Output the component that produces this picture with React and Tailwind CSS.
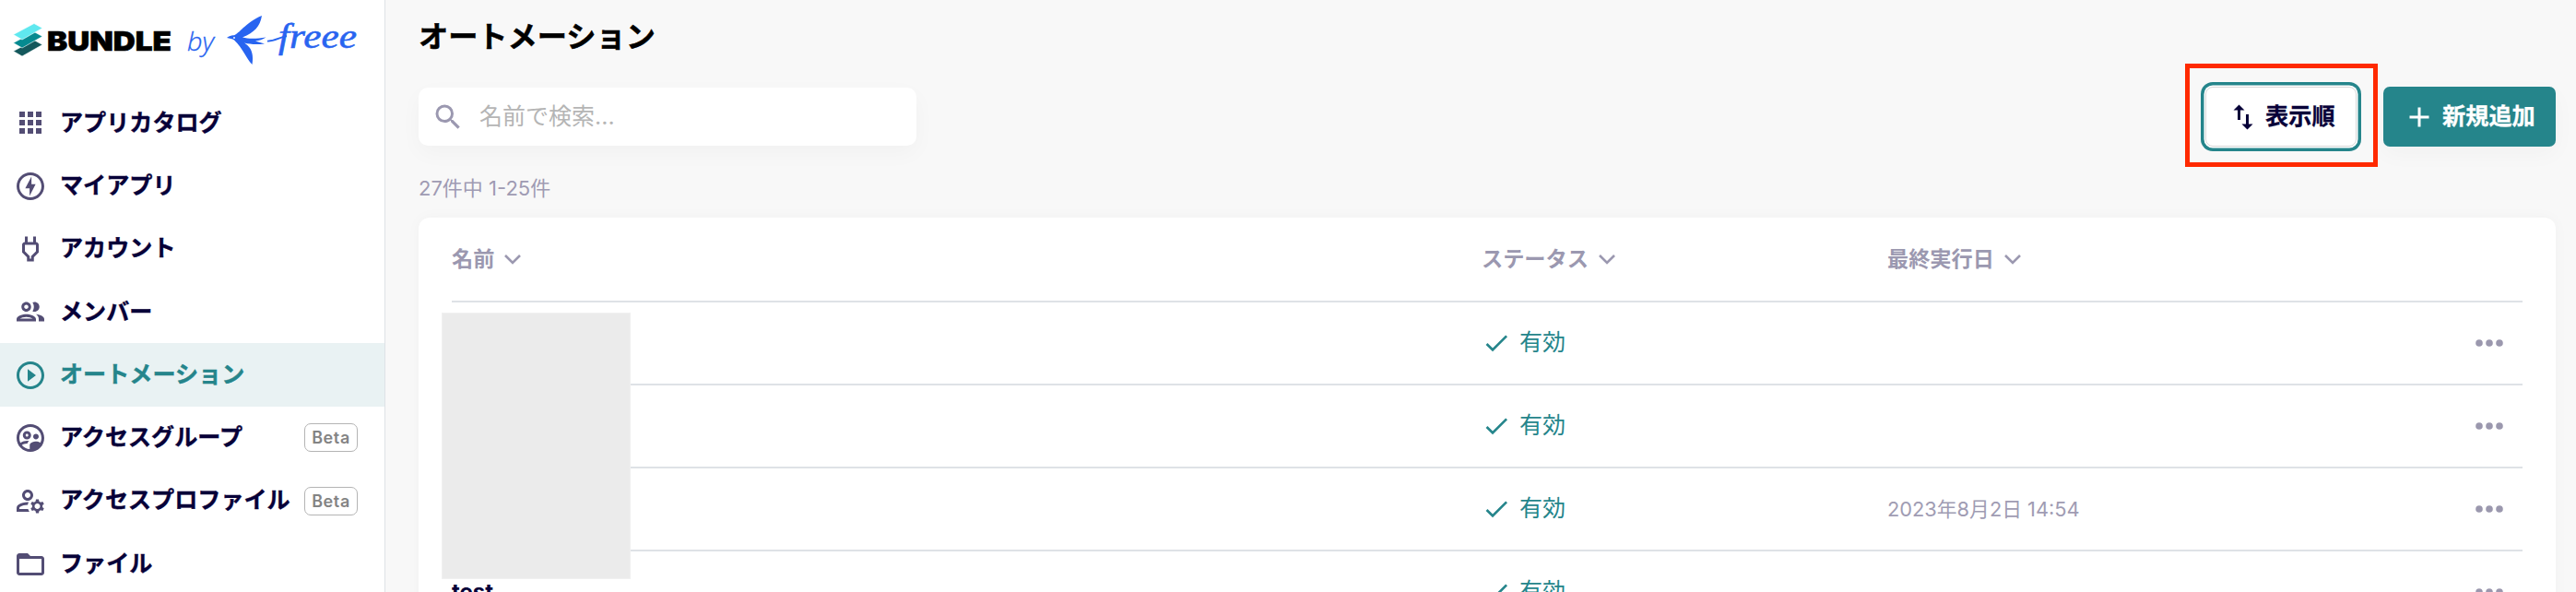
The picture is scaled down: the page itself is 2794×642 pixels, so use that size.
import {
  MdAdd,
  MdApps,
  MdCheck,
  MdFolderOpen,
  MdOutlineManageAccounts,
  MdOutlineOfflineBolt,
  MdOutlinePower,
  MdOutlineSupervisedUserCircle,
  MdPlayCircleOutline,
  MdSearch,
  MdSwapVert,
} from "react-icons/md";

function MembersIcon({ className }) {
  return (
    <svg viewBox="0 0 24 24" fill="currentColor" className={className}>
      <path d="M9 13.75c-2.34 0-7 1.17-7 3.5V19h14v-1.75c0-2.33-4.66-3.5-7-3.5zM4.34 17c.84-.58 2.87-1.25 4.66-1.25s3.82.67 4.66 1.25H4.34zM9 12c1.93 0 3.5-1.57 3.5-3.5S10.93 5 9 5 5.5 6.57 5.5 8.5 7.07 12 9 12zm0-5c.83 0 1.5.67 1.5 1.5S9.83 10 9 10s-1.5-.67-1.5-1.5S8.17 7 9 7zm7.04 6.81c1.16.84 1.96 1.96 1.96 3.44V19h4v-1.75c0-2.02-3.5-3.17-5.96-3.44zM15 12c1.93 0 3.5-1.57 3.5-3.5S16.93 5 15 5c-.54 0-1.04.13-1.5.35.63.89 1 1.98 1 3.15s-.37 2.26-1 3.15c.46.22.96.35 1.5.35z" />
    </svg>
  );
}

const navItems = [
  { label: "アプリカタログ", icon: MdApps },
  { label: "マイアプリ", icon: MdOutlineOfflineBolt },
  { label: "アカウント", icon: MdOutlinePower },
  { label: "メンバー", icon: MembersIcon },
  { label: "オートメーション", icon: MdPlayCircleOutline, active: true },
  { label: "アクセスグループ", icon: MdOutlineSupervisedUserCircle, beta: true },
  { label: "アクセスプロファイル", icon: MdOutlineManageAccounts, beta: true },
  { label: "ファイル", icon: MdFolderOpen },
];

const rows = [
  { name: "", status: "有効", lastRun: "" },
  { name: "", status: "有効", lastRun: "" },
  { name: "", status: "有効", lastRun: "2023年8月2日 14:54" },
  { name: "test", status: "有効", lastRun: "" },
];

function Logo() {
  return (
    <svg viewBox="0 0 400 80" className="block h-20 w-[400px]">
      {/* Stacked sheets */}
      <g stroke="#fff" strokeWidth="0.6">
        <path d="M14.5 55.5 37 43.5 46 48.5 24 61Z" fill="#14585c" />
        <path d="M14.5 46.5 37 34.5 46 39.5 24 52Z" fill="#058a90" />
        <path d="M14.5 37.5 37 25.5 46 30.5 24 43Z" fill="#5fe8ef" />
      </g>
      <text
        x="51"
        y="54.5"
        textLength="135"
        lengthAdjust="spacingAndGlyphs"
        className="fill-black stroke-black stroke-[0.6] font-['Inter',sans-serif] text-[29px] font-black"
      >
        BUNDLE
      </text>
      <text
        x="203"
        y="54.5"
        textLength="29"
        lengthAdjust="spacingAndGlyphs"
        className="fill-[#2864f0] stroke-[#2864f0] stroke-[0.3] font-['Open_Sans',sans-serif] text-[27px] font-light italic"
      >
        by
      </text>
      {/* Swallow */}
      <g fill="#2864f0">
        <path d="M246 41C249 39 251 38 254 38.3C262 34 267 24 284 17C282 29 276 35 263 40.5C270 42.5 279 42 288.5 40.5C285 43 281 44 277 44.5L287 47.5C278 48.5 271 48 265 46.5C272 51 275.5 57 273.5 70C266 62 264 53 254 43.5C252 42 249 41.5 246 41Z" />
        <circle cx="254" cy="41" r="0.9" fill="#fff" />
      </g>
      <path d="M290 44.5C297 45 302 41 311 39" fill="none" stroke="#2864f0" strokeWidth="1.8" />
      <text
        x="302"
        y="52"
        textLength="85"
        lengthAdjust="spacingAndGlyphs"
        className="fill-[#2864f0] stroke-[#2864f0] stroke-[0.6] font-['Liberation_Serif',serif] text-[38px] italic"
      >
        freee
      </text>
    </svg>
  );
}

function NavItem({ label, icon: Icon, active, beta }) {
  return (
    <a
      className={`flex h-[68.3px] items-center pr-[29px] pl-[15px] ${
        active ? "bg-[#e9f2f3] text-[#25858b]" : "text-[#070038]"
      }`}
    >
      <Icon className={`size-9 shrink-0 ${active ? "" : "text-[#534d74]"}`} />
      <span className="ml-[14px] text-[25.1px] font-bold whitespace-nowrap [-webkit-text-stroke:0.4px]">
        {label}
      </span>
      {beta && (
        <span className="ml-auto flex h-[31px] w-[58px] items-center justify-center rounded-[7px] border border-[#b4b4b4] text-[18px] font-semibold tracking-[0.6px] text-[#848484]">
          Beta
        </span>
      )}
    </a>
  );
}

function Sidebar() {
  return (
    <aside className="h-full w-[418px] shrink-0 border-r border-[#dee2e6] bg-white">
      <div className="h-[99.3px]">
        <Logo />
      </div>
      <nav>
        {navItems.map((item) => (
          <NavItem key={item.label} {...item} />
        ))}
      </nav>
    </aside>
  );
}

function ColumnHeader({ children }) {
  return (
    <div className="flex items-center gap-[11px]">
      <span>{children}</span>
      <svg viewBox="0 0 18 12" className="h-3 w-[18px]">
        <path d="M1 2 9 10 17 2" fill="none" stroke="currentColor" strokeWidth="2.6" />
      </svg>
    </div>
  );
}

function Row({ name, status, lastRun }) {
  return (
    <div className="grid h-[90px] grid-cols-[1117px_440px_1fr_73px] items-center border-b-2 border-[#dee2e6]">
      <span className="text-[24px] font-bold text-[#070038]">{name}</span>
      <span className="flex items-center gap-[9px] text-[25px] text-[#25858b]">
        <MdCheck className="size-8" />
        {status}
      </span>
      <span className="text-[21.8px] text-[#a09cb3]">{lastRun}</span>
      <svg viewBox="0 0 30 8" className="ml-[22px] h-2 w-[30px] fill-[#9b98ae]">
        <circle cx="4" cy="4" r="3.8" />
        <circle cx="15" cy="4" r="3.8" />
        <circle cx="26" cy="4" r="3.8" />
      </svg>
    </div>
  );
}

export default function App() {
  return (
    <div className="flex h-[642px] w-[2794px] overflow-hidden bg-[#f8f8f8] font-['Inter','Noto_Sans_CJK_JP',sans-serif]">
      <Sidebar />

      <main className="flex min-w-0 flex-1 flex-col pr-[22px] pl-9">
        <h1 className="mt-4 h-12 text-[32.2px] leading-[48px] font-bold text-black [-webkit-text-stroke:0.5px]">
          オートメーション
        </h1>

        {/* Toolbar */}
        <div className="mt-[30px] flex h-[65px] items-center justify-between">
          <label className="flex h-[63px] w-[540px] items-center rounded-[10px] bg-white pl-[14px] shadow-[0_8px_24px_rgba(0,0,0,0.03)]">
            <MdSearch className="size-9 text-[#9b98b0]" />
            <input
              placeholder="名前で検索..."
              className="ml-4 flex-1 bg-transparent text-[25px] outline-none placeholder:text-[#b5b5b5]"
            />
          </label>

          <div className="flex gap-[29px]">
            <div className="relative">
              <button className="flex h-[65px] w-[164px] items-center rounded-[8px] border border-[#d8d8d8] bg-white pl-[22px] text-[25.2px] font-bold text-[#070038] shadow-[0_0_0_1.5px_#fff,0_0_0_5px_#25858b]">
                <MdSwapVert className="size-9" />
                <span className="ml-[6px] [-webkit-text-stroke:0.3px]">表示順</span>
              </button>
              <div className="pointer-events-none absolute -top-[25px] -left-[22px] h-[112px] w-[209px] border-5 border-[#ff2a00]" />
            </div>
            <button className="flex h-[65px] w-[187px] items-center rounded-[7px] bg-[#25858b] pl-[21px] text-[25.2px] font-bold text-white shadow-[0_8px_24px_rgba(0,0,0,0.03)]">
              <MdAdd className="size-9" />
              <span className="ml-[7px] [-webkit-text-stroke:0.3px]">新規追加</span>
            </button>
          </div>
        </div>

        <p className="mt-[29px] h-8 text-[22px] leading-8 text-[#9f9bb3]">27件中 1-25件</p>

        {/* Automation table */}
        <section className="relative mt-4 h-[500px] shrink-0 rounded-t-[12px] bg-white px-9 shadow-[0_0_16px_rgba(0,0,0,0.03)]">
          <div className="grid h-[92px] grid-cols-[1117px_440px_1fr_73px] items-center border-b-2 border-[#dee2e6] text-[23.2px] font-bold text-[#9b98b0]">
            <ColumnHeader>名前</ColumnHeader>
            <ColumnHeader>ステータス</ColumnHeader>
            <ColumnHeader>最終実行日</ColumnHeader>
          </div>
          {rows.map((row, i) => (
            <Row key={i} {...row} />
          ))}
          {/* Masked names */}
          <div className="absolute top-[103px] left-[25px] h-[289px] w-[205px] border border-[#f0f0f0] bg-[#ebebeb]" />
        </section>
      </main>
    </div>
  );
}
